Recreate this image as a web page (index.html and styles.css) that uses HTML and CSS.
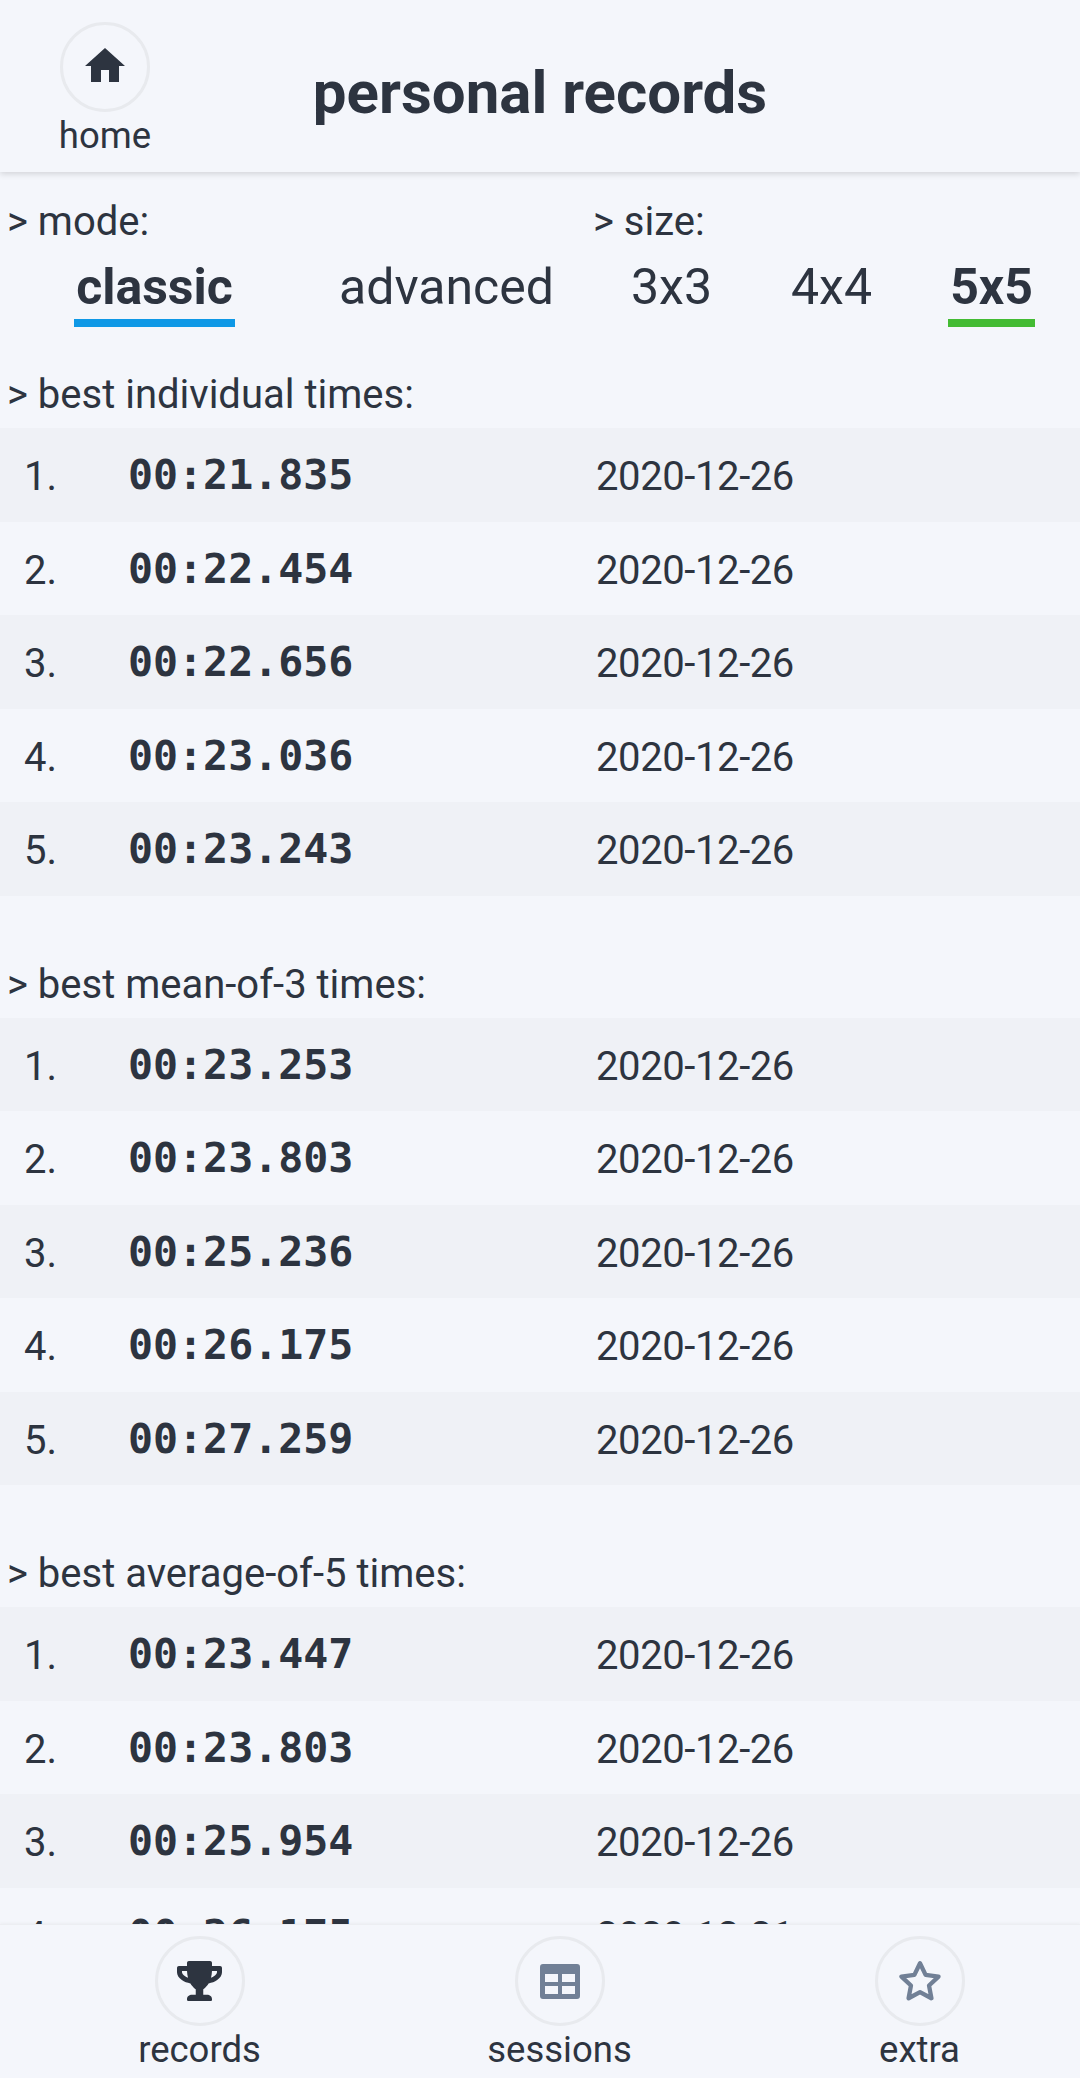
FILE: index.html
```html
<!DOCTYPE html>
<html lang="en">
<head>
    <meta charset="UTF-8">
    <meta name="viewport" content="width=device-width, initial-scale=1.0">
    <title>personal records</title>
    <link rel="stylesheet" href="styles.css">
</head>
<body>
    <header class="topbar">
        <a class="nav-item home-link">
            <span class="nav-circle">
                <svg class="icon-home" viewBox="2 3 20 17"><path d="M10 20v-6h4v6h5v-8h3L12 3 2 12h3v8z"/></svg>
            </span>
            <span class="nav-label">home</span>
        </a>
        <h1 class="title">personal records</h1>
    </header>

    <main class="content">
        <div class="selectors">
            <div class="selector selector-mode">
                <div class="section-label">&gt; mode:</div>
                <div class="tabs">
                    <span class="tab tab-classic active-blue">classic</span>
                    <span class="tab tab-advanced">advanced</span>
                </div>
            </div>
            <div class="selector selector-size">
                <div class="section-label">&gt; size:</div>
                <div class="tabs">
                    <span class="tab tab-3">3x3</span>
                    <span class="tab tab-4">4x4</span>
                    <span class="tab tab-5 active-green">5x5</span>
                </div>
            </div>
        </div>

        <section class="records">
            <div class="section-label">&gt; best individual times:</div>
            <div class="row"><span class="rank">1.</span><span class="time">00:21.835</span><span class="date">2020-12-26</span></div>
            <div class="row"><span class="rank">2.</span><span class="time">00:22.454</span><span class="date">2020-12-26</span></div>
            <div class="row"><span class="rank">3.</span><span class="time">00:22.656</span><span class="date">2020-12-26</span></div>
            <div class="row"><span class="rank">4.</span><span class="time">00:23.036</span><span class="date">2020-12-26</span></div>
            <div class="row"><span class="rank">5.</span><span class="time">00:23.243</span><span class="date">2020-12-26</span></div>
        </section>

        <section class="records">
            <div class="section-label">&gt; best mean-of-3 times:</div>
            <div class="row"><span class="rank">1.</span><span class="time">00:23.253</span><span class="date">2020-12-26</span></div>
            <div class="row"><span class="rank">2.</span><span class="time">00:23.803</span><span class="date">2020-12-26</span></div>
            <div class="row"><span class="rank">3.</span><span class="time">00:25.236</span><span class="date">2020-12-26</span></div>
            <div class="row"><span class="rank">4.</span><span class="time">00:26.175</span><span class="date">2020-12-26</span></div>
            <div class="row"><span class="rank">5.</span><span class="time">00:27.259</span><span class="date">2020-12-26</span></div>
        </section>

        <section class="records">
            <div class="section-label">&gt; best average-of-5 times:</div>
            <div class="row"><span class="rank">1.</span><span class="time">00:23.447</span><span class="date">2020-12-26</span></div>
            <div class="row"><span class="rank">2.</span><span class="time">00:23.803</span><span class="date">2020-12-26</span></div>
            <div class="row"><span class="rank">3.</span><span class="time">00:25.954</span><span class="date">2020-12-26</span></div>
            <div class="row"><span class="rank">4.</span><span class="time">00:26.175</span><span class="date">2020-12-21</span></div>
        </section>
    </main>

    <nav class="bottombar">
        <a class="nav-item">
            <span class="nav-circle">
                <svg class="icon-trophy" viewBox="0 0 576 512"><path d="M552 64H448V24c0-13.3-10.7-24-24-24H152c-13.3 0-24 10.7-24 24v40H24C10.7 64 0 74.7 0 88v56c0 35.7 22.5 72.4 61.9 100.7 31.5 22.7 69.8 37.1 110 41.7C203.3 338.5 240 360 240 360v72h-48c-35.3 0-64 20.7-64 56v12c0 6.6 5.4 12 12 12h296c6.6 0 12-5.4 12-12v-12c0-35.3-28.7-56-64-56h-48v-72s36.7-21.5 68.1-73.6c40.3-4.6 78.6-19 110-41.7 39.3-28.3 61.9-65 61.9-100.7V88c0-13.3-10.7-24-24-24zM99.3 192.8C74.9 175.2 64 155.6 64 144v-16h64.2c1 32.6 5.8 61.2 12.8 86.2-15.1-5.2-29.2-12.4-41.7-21.4zM512 144c0 16.1-17.7 36.1-35.3 48.8-12.5 9-26.7 16.2-41.8 21.4 7-25 11.8-53.6 12.8-86.2H512v16z"/></svg>
            </span>
            <span class="nav-label">records</span>
        </a>
        <a class="nav-item">
            <span class="nav-circle">
                <svg class="icon-table" viewBox="0 0 40 35"><path fill-rule="evenodd" d="M3 0h34a3 3 0 0 1 3 3v29a3 3 0 0 1-3 3H3a3 3 0 0 1-3-3V3a3 3 0 0 1 3-3zM5 10v8h13v-8zM22 10v8h13v-8zM5 22v8h13v-8zM22 22v8h13v-8z"/></svg>
            </span>
            <span class="nav-label">sessions</span>
        </a>
        <a class="nav-item">
            <span class="nav-circle">
                <svg class="icon-star" viewBox="1.500 1 39 37"><path d="M21 3l5.200 10.800 12 1.600-8.800 8.300 2.200 11.800L21 29.800 10.400 35.500l2.200-11.800-8.800-8.300 12-1.600z"/></svg>
            </span>
            <span class="nav-label">extra</span>
        </a>
    </nav>
</body>
</html>
```

FILE: styles.css
```css
* {
    box-sizing: border-box;
}
body {
    margin: 0;
    height: 100vh;
    display: flex;
    flex-direction: column;
    overflow: hidden;
    font-family: Roboto, sans-serif;
    color: #2d3440;
    background-color: #f4f6fb;
}
.topbar {
    position: relative;
    z-index: 1;
    height: 172px;
    flex: none;
    display: grid;
    grid-template-columns: 1fr auto 1fr;
    align-items: start;
    box-shadow: 0 2px 6px rgba(0, 0, 0, 0.14);
}
.home-link {
    justify-self: start;
    margin: 22px 0 0 60px;
}
.title {
    margin: 58px 0 0;
    font-size: 60px;
    line-height: 70px;
    font-weight: 700;
}
.nav-item {
    display: flex;
    flex-direction: column;
    align-items: center;
    width: 90px;
}
.nav-circle {
    width: 90px;
    height: 90px;
    flex: none;
    display: flex;
    align-items: center;
    justify-content: center;
    border: 3px solid #e8eaee;
    border-radius: 50%;
}
.nav-label {
    margin-top: 4px;
    font-size: 36.500px;
    line-height: 40px;
    white-space: nowrap;
}
.icon-home {
    width: 40px;
    height: 34px;
    margin-bottom: 4px;
    fill: #2d3440;
}
.icon-trophy {
    width: 45px;
    height: 40px;
    fill: #2d3440;
}
.icon-table {
    width: 40px;
    height: 35px;
    fill: #718096;
}
.icon-star {
    width: 42px;
    height: 40px;
    fill: none;
    stroke: #718096;
    stroke-width: 4;
    stroke-linejoin: round;
}
.content {
    flex: 1;
    min-height: 0;
    overflow: hidden;
}
.section-label {
    padding-left: 7px;
    font-size: 40px;
    line-height: 44px;
}
.selectors {
    display: flex;
    padding-top: 28px;
}
.selector-mode {
    width: 586px;
}
.tabs {
    display: flex;
    margin-top: 14px;
    height: 69px;
}
.tab {
    height: 69px;
    font-size: 50px;
    line-height: 58px;
    text-align: center;
}
.tab-classic {
    width: 161px;
    margin-left: 74px;
    font-weight: 700;
}
.tab-advanced {
    margin-left: 104px;
}
.tab-3 {
    margin-left: 45px;
}
.tab-4 {
    margin-left: 79px;
}
.tab-5 {
    width: 87px;
    margin-left: 76px;
    font-weight: 700;
}
.active-blue {
    border-bottom: 8px solid #0e98e6;
}
.active-green {
    border-bottom: 8px solid #43bb33;
}
.records {
    margin-bottom: 67px;
}
.selectors + .records {
    margin-top: 46px;
}
.records .section-label {
    padding-bottom: 11px;
}
.row {
    display: flex;
    align-items: flex-start;
    height: 93.500px;
}
.row:nth-child(even) {
    background-color: #eff1f6;
}
.rank {
    width: 128px;
    padding-left: 24px;
    font-size: 40px;
    line-height: 97px;
}
.time {
    width: 468px;
    font-family: "DejaVu Sans Mono", monospace;
    font-size: 41.600px;
    line-height: 93.500px;
    font-weight: 700;
}
.date {
    font-size: 40px;
    line-height: 97px;
    letter-spacing: -0.400px;
}
.bottombar {
    flex: none;
    height: 154px;
    display: flex;
    gap: 270px;
    padding: 11px 0 0 154.500px;
    border-top: 1px solid #eceef2;
    background-color: #f4f6fb;
    box-shadow: 0 -1px 3px rgba(0, 0, 0, 0.04);
}
```
